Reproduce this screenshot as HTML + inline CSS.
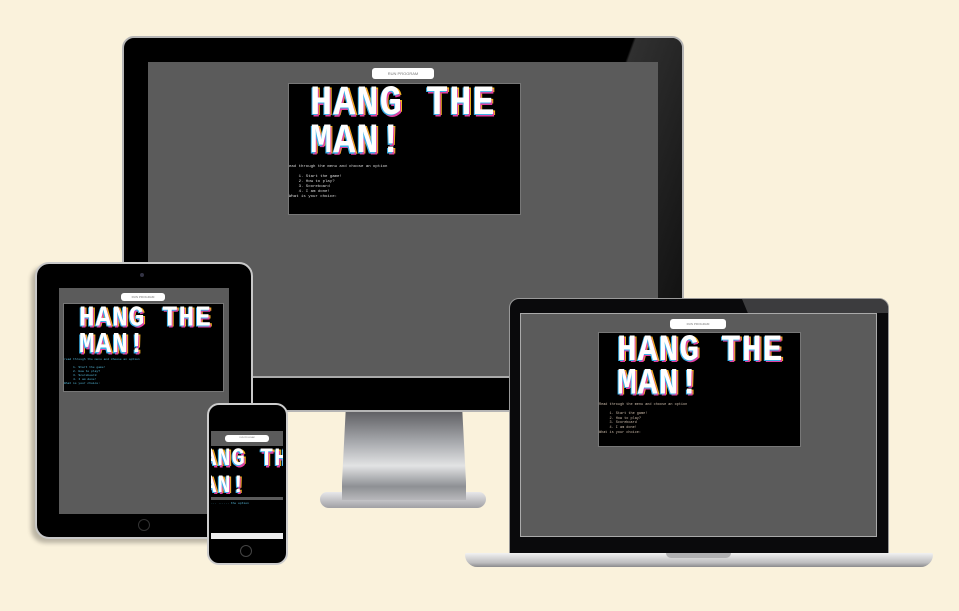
<!DOCTYPE html>
<html><head><style>
*{margin:0;padding:0;box-sizing:border-box}
body{width:959px;height:611px;background:#faf2dc;position:relative;overflow:hidden;font-family:"Liberation Mono",monospace}
.a{position:absolute}
.term{position:absolute;background:#000;border:1px solid #777;overflow:hidden}
.t{position:absolute;color:#fff;font-family:"Liberation Mono",monospace;font-weight:bold;white-space:pre;letter-spacing:1px;text-shadow:-1px 1px 0 #3ab0e8,1px 2px 0 #e040a0,2px 1px 0 #f0b020;transform:scaleY(1.12);transform-origin:0 0}
.s{position:absolute;font-size:4px;line-height:5px;white-space:pre;color:#ddd}
.btn{position:absolute;background:#fff;border-radius:3px;font-family:"Liberation Sans",sans-serif;color:#777;text-align:center}
</style></head><body>

<!-- monitor -->
<div class="a" style="left:320px;top:492px;width:166px;height:16px;background:linear-gradient(#e8e8ea,#a0a0a4);border-radius:8px 8px 10px 10px"></div>
<div class="a" style="left:342px;top:410px;width:124px;height:90px;background:linear-gradient(#5c5c60 0%,#a6a8ac 35%,#e2e3e4 62%,#8e9094 85%,#b8b8bb);clip-path:polygon(3% 0,97% 0,100% 80%,104% 100%,-4% 100%,0 80%)"></div>
<div class="a" style="left:122px;top:36px;width:562px;height:376px;background:#000;border-radius:12px 12px 0 0;border:2px solid #b5b5b5;border-bottom-width:2px"></div>
<div class="a" style="left:560px;top:38px;width:122px;height:340px;background:linear-gradient(110deg,rgba(0,0,0,0) 30%,rgba(80,80,80,.6) 31%,rgba(40,40,40,.3));border-radius:0 10px 0 0"></div>
<div class="a" style="left:148px;top:62px;width:510px;height:316px;background:#5b5b5b;border-bottom:2px solid #aaa"></div>
<div class="btn" style="left:372px;top:68px;width:62px;height:11px;font-size:4px;line-height:11px">RUN PROGRAM</div>
<div class="term" style="left:288px;top:83px;width:233px;height:132px">
 <div class="t" style="left:21px;top:1px;font-size:37px;line-height:34px">HANG THE
MAN!</div>
 <div class="s" style="left:0;top:81px">ead through the menu and choose an option

    1. Start the game!
    2. How to play?
    3. Scoreboard
    4. I am done!
What is your choice:</div>
</div>

<!-- tablet -->
<div class="a" style="left:35px;top:262px;width:218px;height:277px;background:#000;border-radius:14px;border:2px solid #c8c8c8;box-shadow:-4px 4px 4px rgba(0,0,0,.25)"></div>
<div class="a" style="left:140px;top:273px;width:4px;height:4px;border-radius:50%;background:#334"></div>
<div class="a" style="left:138px;top:519px;width:12px;height:12px;border-radius:50%;border:1px solid #333"></div>
<div class="a" style="left:59px;top:288px;width:170px;height:226px;background:#5b5b5b"></div>
<div class="btn" style="left:121px;top:293px;width:44px;height:8px;font-size:3px;line-height:8px">RUN PROGRAM</div>
<div class="term" style="left:63px;top:303px;width:161px;height:89px">
 <div class="t" style="left:15px;top:0px;font-size:26px;line-height:24px">HANG THE
MAN!</div>
 <div class="s" style="left:0;top:54px;font-size:3px;line-height:4px;color:#5bd">read through the menu and choose an option

     1. Start the game!
     2. How to play?
     3. Scoreboard
     4. I am done!
What is your choice:</div>
</div>

<!-- phone -->
<div class="a" style="left:207px;top:403px;width:81px;height:162px;background:#000;border-radius:12px;border:2px solid #ccc"></div>
<div class="a" style="left:240px;top:545px;width:12px;height:12px;border-radius:50%;border:1px solid #444"></div>
<div class="a" style="left:211px;top:431px;width:72px;height:108px;background:#000;overflow:hidden">
 <div class="a" style="left:0;top:0;width:72px;height:15px;background:#5b5b5b"></div>
 <div class="btn" style="left:14px;top:4px;width:44px;height:7px;font-size:2px;line-height:7px">RUN PROGRAM</div>
 <div class="t" style="left:-22px;top:15px;font-size:22px;line-height:24px">HANG THE
MAN!</div>
 <div class="a" style="left:0;top:66px;width:72px;height:3px;background:#5b5b5b"></div>
 <div class="s" style="left:0;top:70px;font-size:3px;color:#5bd">... ...... the option</div>
 <div class="a" style="left:0;top:102px;width:72px;height:6px;background:#eee"></div>
</div>

<!-- laptop -->
<div class="a" style="left:509px;top:298px;width:380px;height:257px;background:#0a0a0c;border-radius:10px 10px 0 0;border:1px solid #999"></div>
<div class="a" style="left:742px;top:299px;width:146px;height:14px;background:#3c3c3e;clip-path:polygon(0 0,100% 0,100% 100%,4% 100%);border-radius:0 9px 0 0"></div>
<div class="a" style="left:520px;top:313px;width:357px;height:224px;background:#5b5b5b;border:1px solid #aaa"></div>
<div class="a" style="left:465px;top:553px;width:468px;height:14px;background:linear-gradient(#f2f2f2,#bcbcbe 70%,#8a8a8c);border-radius:2px 2px 14px 14px"></div>
<div class="a" style="left:666px;top:553px;width:65px;height:5px;background:#b0b0b2;border-radius:0 0 5px 5px"></div>
<div class="btn" style="left:670px;top:319px;width:56px;height:10px;font-size:3px;line-height:10px">RUN PROGRAM</div>
<div class="term" style="left:598px;top:332px;width:203px;height:115px">
 <div class="t" style="left:18px;top:1px;font-size:33px;line-height:30px">HANG THE
MAN!</div>
 <div class="s" style="left:0;top:70px;font-size:3.5px;line-height:4.6px;color:#cba">Read through the menu and choose an option

     1. Start the game!
     2. How to play?
     3. Scoreboard
     4. I am done!
What is your choice:</div>
</div>

</body></html>
